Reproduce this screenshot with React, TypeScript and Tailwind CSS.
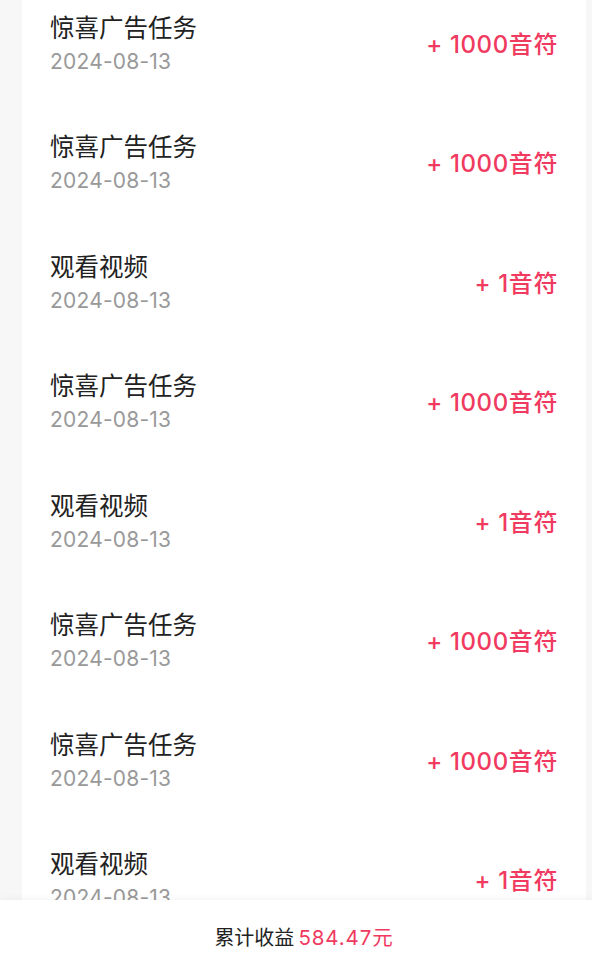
const rows = [
  { title: '惊喜广告任务', amount: 1000 },
  { title: '惊喜广告任务', amount: 1000 },
  { title: '观看视频', amount: 1 },
  { title: '惊喜广告任务', amount: 1000 },
  { title: '观看视频', amount: 1 },
  { title: '惊喜广告任务', amount: 1000 },
  { title: '惊喜广告任务', amount: 1000 },
  { title: '观看视频', amount: 1 },
  { title: '惊喜广告任务', amount: 1000 },
]

export default function App() {
  return (
    <div
      className="h-[964px] flex flex-col bg-[#f7f7f7] overflow-hidden"
      style={{ fontFamily: 'Inter, "Noto Sans CJK SC", sans-serif' }}
    >
      <div className="flex-1 overflow-hidden pl-[22px] pr-[6px]">
        <div className="bg-white -mt-[15px] px-[28px]">
          {rows.map((r, i) => (
            <div key={i} className="flex items-center justify-between h-[119.5px]">
              <div className="flex flex-col">
                <span className="text-[24.5px] leading-[34px] text-[#222]">{r.title}</span>
                <span className="text-[21px] leading-[34px] text-[#999] tracking-[0.2px]">2024-08-13</span>
              </div>
              <span className="text-[24px] font-medium text-[#f03a5f] tracking-[0.6px]">+ {r.amount}音符</span>
            </div>
          ))}
        </div>
      </div>
      <div className="relative z-10 h-[64px] shrink-0 bg-white shadow-[0_-2px_8px_rgba(0,0,0,0.04)] flex items-center justify-center pt-3 pl-[16px]">
        <span className="text-[20px] text-[#222]">累计收益</span>
        <span className="text-[20.5px] text-[#f03a5f] ml-[4px] tracking-[0.9px]">584.47元</span>
      </div>
    </div>
  )
}
